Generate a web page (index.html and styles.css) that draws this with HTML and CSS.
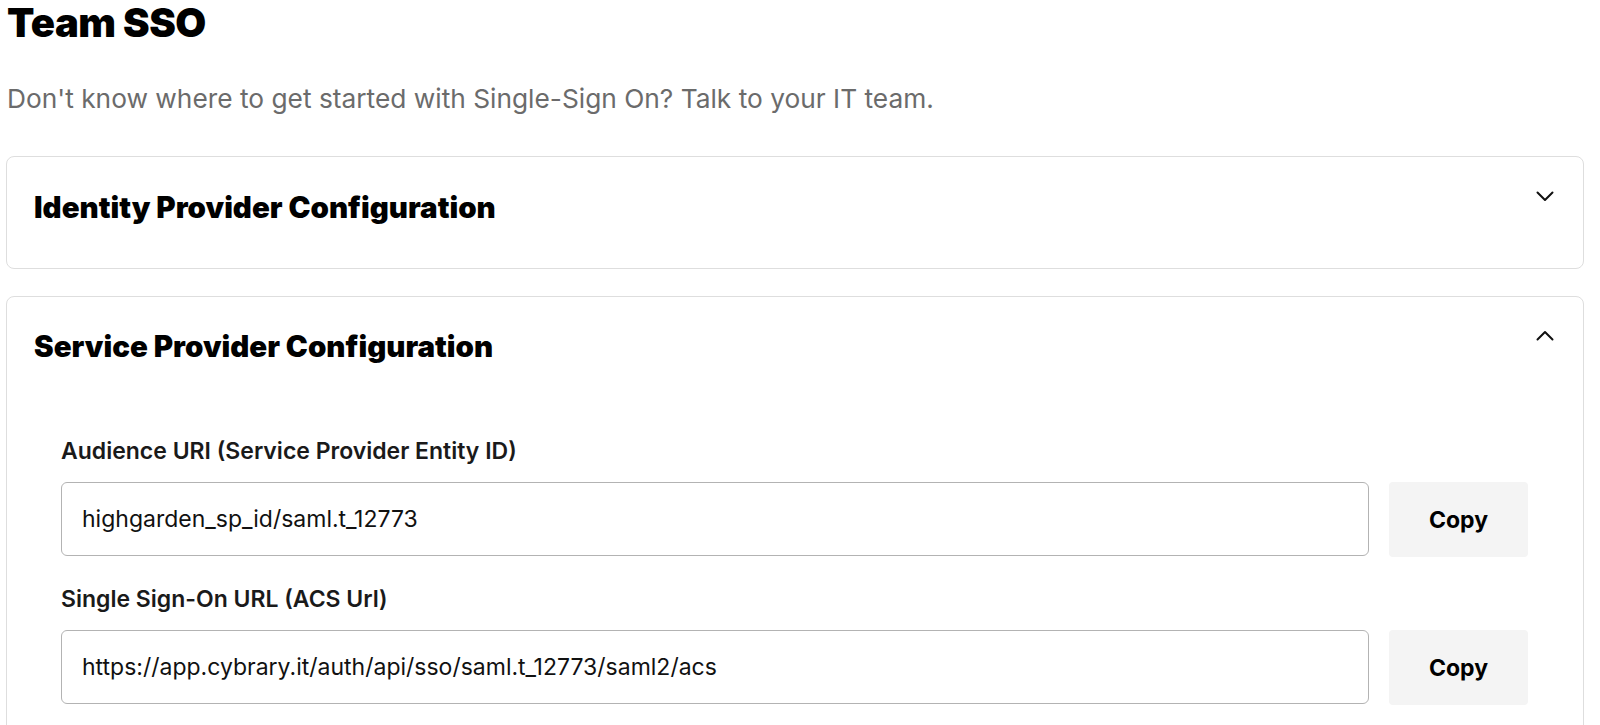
FILE: index.html
```html
<!DOCTYPE html>
<html>
<head>
<meta charset="utf-8">
<link rel="stylesheet" href="styles.css">
</head>
<body>
<div class="page">
  <h1 class="title">Team SSO</h1>
  <p class="subtitle">Don't know where to get started with Single-Sign On? Talk to your IT team.</p>

  <section class="card collapsed">
    <div class="card-header">
      <h2 class="card-title">Identity Provider Configuration</h2>
      <svg class="chevron" width="18" height="11" viewBox="0 0 18 11"><path d="M1.5 1.5 L9 9 L16.5 1.5" fill="none" stroke="#111" stroke-width="2" stroke-linecap="round" stroke-linejoin="round"/></svg>
    </div>
  </section>

  <section class="card open">
    <div class="card-header">
      <h2 class="card-title">Service Provider Configuration</h2>
      <svg class="chevron" width="18" height="11" viewBox="0 0 18 11"><path d="M1.5 9.5 L9 2 L16.5 9.5" fill="none" stroke="#111" stroke-width="2" stroke-linecap="round" stroke-linejoin="round"/></svg>
    </div>
    <div class="card-body">
      <div class="field">
        <label class="field-label">Audience URI (Service Provider Entity ID)</label>
        <div class="field-row">
          <div class="field-input">highgarden_sp_id/saml.t_12773</div>
          <button class="copy-btn">Copy</button>
        </div>
      </div>
      <div class="field">
        <label class="field-label">Single Sign-On URL (ACS Url)</label>
        <div class="field-row">
          <div class="field-input">https://app.cybrary.it/auth/api/sso/saml.t_12773/saml2/acs</div>
          <button class="copy-btn">Copy</button>
        </div>
      </div>
    </div>
  </section>
</div>
</body>
</html>
```

FILE: styles.css
```css
* { box-sizing: border-box; }
html, body { margin: 0; padding: 0; background: #fff; }
body { font-family: Inter, "Noto Sans", sans-serif; color: #000; overflow: hidden; height: 725px; }

.page { padding: 0 16px 0 6px; }

.title {
  margin: 0;
  padding: 0 0 0 1px;
  font-size: 40px;
  line-height: 46px;
  font-weight: 900;
  letter-spacing: -0.5px;
}

.subtitle {
  margin: 37px 0 0 0;
  padding-left: 1px;
  font-size: 26.3px;
  line-height: 32px;
  color: #6b6b6b;
}

.card {
  border: 1px solid #dedede;
  border-radius: 8px;
  margin-top: 41px;
}
.card.open { margin-top: 27px; padding-bottom: 60px; }

.card-header {
  display: flex;
  align-items: flex-start;
  justify-content: space-between;
  padding: 32px 29px 0 27px;
}
.card.collapsed .card-header { height: 111px; }

.card-title {
  margin: 0;
  font-size: 29.5px;
  line-height: 36px;
  font-weight: 900;
}
.chevron { margin-top: 2px; }
.card.open .card-header { padding-top: 31px; }

.card-body { padding: 73px 55px 0 54px; }

.field + .field { margin-top: 28px; }

.field-label {
  display: block;
  font-size: 23px;
  line-height: 28px;
  font-weight: 600;
  color: #1a1a1a;
  margin-bottom: 17px;
}

.field-row { display: flex; gap: 20px; }

.field-input {
  flex: 1;
  height: 74px;
  border: 1px solid #b3b3b3;
  border-radius: 6px;
  padding: 0 20px;
  display: flex;
  align-items: center;
  font-size: 23px;
  color: #111;
}

.copy-btn {
  width: 139px;
  height: 75px;
  border: none;
  border-radius: 4px;
  background: #f4f4f4;
  font-family: Inter, "Noto Sans", sans-serif;
  font-size: 23px;
  font-weight: 700;
  color: #000;
}
```
